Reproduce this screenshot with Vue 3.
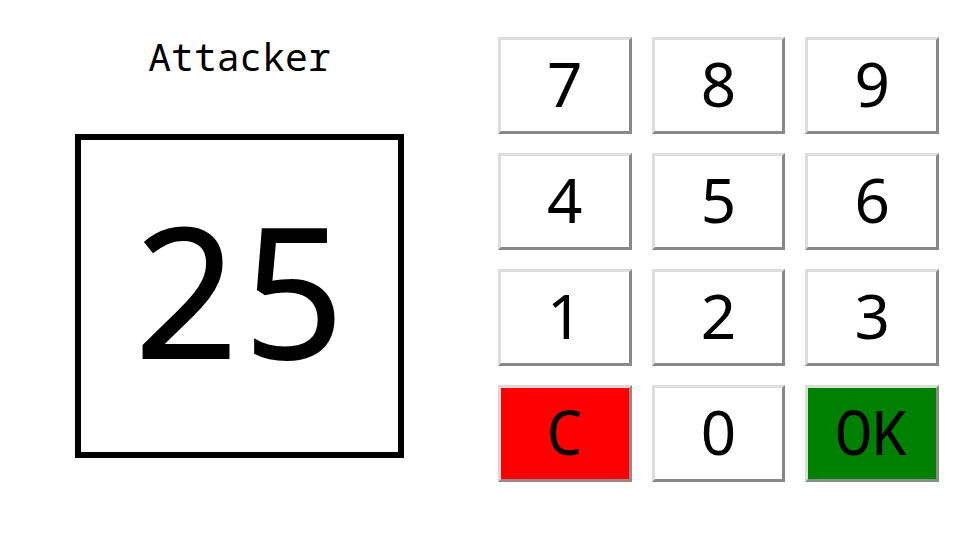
<script setup>
import { ref } from 'vue'

const value = ref('25')
const keys = ['7', '8', '9', '4', '5', '6', '1', '2', '3', 'C', '0', 'OK']

function press(key) {
  if (key === 'C') value.value = ''
  else if (key !== 'OK' && value.value.length < 2) value.value += key
}
</script>

<template>
  <main class="board">
    <section class="player">
      <h1 class="title">Attacker</h1>
      <output class="display">{{ value }}</output>
    </section>
    <section class="keypad">
      <button
        v-for="key in keys"
        :key="key"
        type="button"
        class="key"
        :class="{ clear: key === 'C', confirm: key === 'OK' }"
        @click="press(key)"
      >{{ key }}</button>
    </section>
  </main>
</template>

<style>
body {
  background: #fff;
}
</style>

<style scoped>
.board {
  display: grid;
  grid-template-columns: 1fr 1fr;
  align-items: start;
  color: #000;
  font-family: "Noto Sans Mono", "Noto Sans", monospace;
}

.player {
  display: flex;
  flex-direction: column;
  gap: 52px;
  padding: 30px 75px 0;
}

.title {
  margin: 0;
  font-size: 38px;
  font-weight: 400;
  line-height: 52px;
  text-align: center;
}

.display {
  display: flex;
  align-items: center;
  justify-content: center;
  box-sizing: border-box;
  height: 324px;
  padding-bottom: 16px;
  border: 6px solid #000;
  font-size: 183px;
  line-height: 252px;
}

.keypad {
  display: grid;
  grid-template-columns: repeat(3, 1fr);
  grid-auto-rows: 97px;
  gap: 19px 20px;
  padding: 37px 19px 0;
}

.key {
  min-width: 0;
  padding: 0 0 6px;
  border: 3px solid;
  border-color: #ddd #888 #888 #ddd;
  background: #fff;
  color: #000;
  font-family: "Noto Sans", sans-serif;
  font-size: 62px;
  line-height: 86px;
}

.clear,
.confirm {
  font-family: "Noto Sans Mono", monospace;
}

.clear {
  border-color: #e8d4d4 #a08484 #a08484 #e8d4d4;
  background: #f00;
}

.confirm {
  border-color: #d4e2d4 #849084 #849084 #d4e2d4;
  background: #008000;
}
</style>
